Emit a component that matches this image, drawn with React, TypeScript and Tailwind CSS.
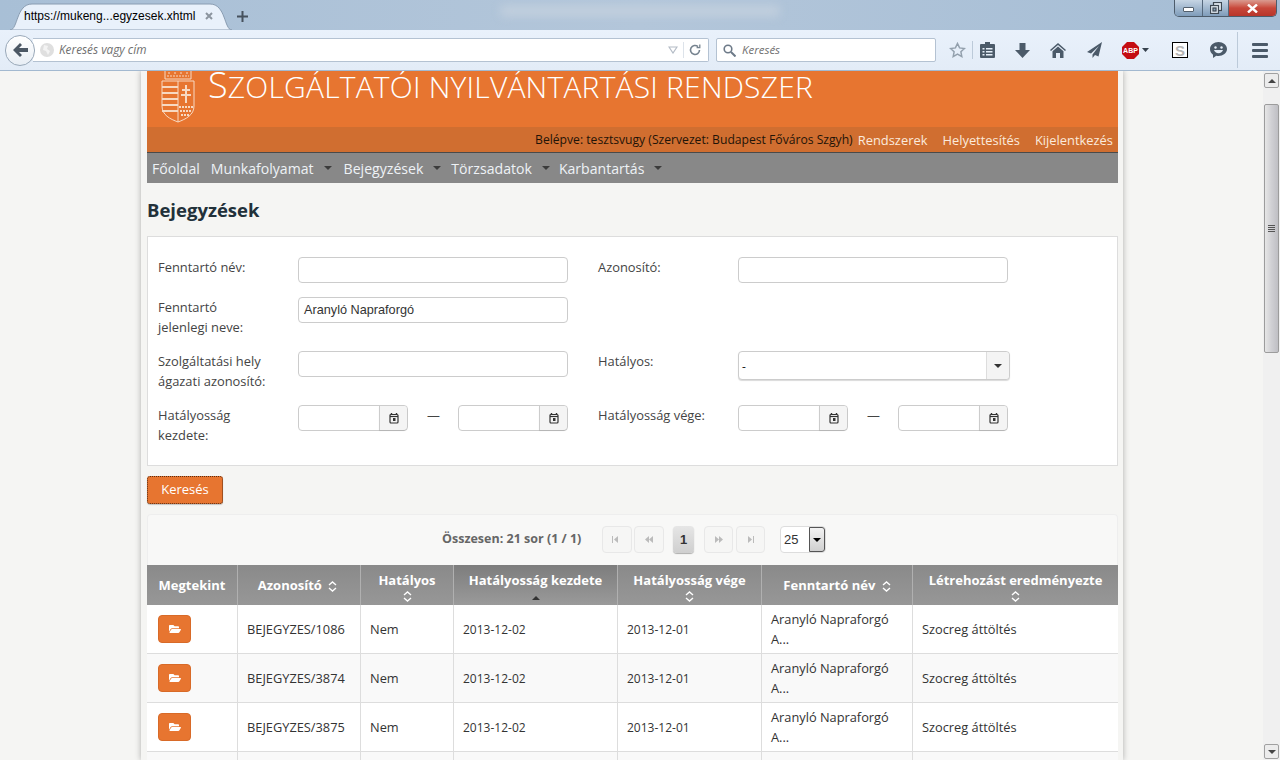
import { FaFolderOpen } from "react-icons/fa";

const font = "font-['Open_Sans','Liberation_Sans',sans-serif]";

const rows = ["BEJEGYZES/1086", "BEJEGYZES/3874", "BEJEGYZES/3875", "BEJEGYZES/3876"];

function Calendar() {
  return (
    <svg width="10" height="11" viewBox="0 0 10 11" fill="none">
      <path d="M2.5 0v2M7.5 0v2" stroke="#333" strokeWidth="1.4" />
      <rect x="1" y="1.5" width="8" height="8.5" rx="1" stroke="#333" strokeWidth="1.2" />
      <path d="M1 3.5h8" stroke="#333" strokeWidth="1.2" />
      <rect x="4" y="5" width="2.5" height="3" fill="#333" />
    </svg>
  );
}

function SortBoth() {
  return (
    <svg width="9" height="11" viewBox="0 0 9 11" fill="none" stroke="#fff" strokeWidth="1.4" className="inline-block">
      <path d="M1 4l3.5-3L8 4M1 7l3.5 3L8 7" />
    </svg>
  );
}

function DateField({ w }: { w: string }) {
  return (
    <div className={`flex h-[26px] rounded-[4px] border border-[#ccc] bg-white ${w}`}>
      <div className="flex-1" />
      <div className="flex w-[28px] items-center justify-center rounded-r-[4px] border-l border-[#ccc] bg-[#f4f4f4] shadow-[0_1px_1px_rgba(0,0,0,0.12)]">
        <Calendar />
      </div>
    </div>
  );
}

function PageBtn({ d, w }: { d: string; w: string }) {
  return (
    <div className={`flex h-[27px] items-center justify-center rounded-[4px] border border-[#e8e8e8] bg-[#f6f6f5] ${w}`}>
      <svg width="14" height="7" viewBox="0 0 14 7" fill="#bbb">
        <path d={d} />
      </svg>
    </div>
  );
}

function Browser() {
  return (
    <>
      {/* Tabs */}
      <div className="relative h-[30px] shrink-0 overflow-hidden bg-gradient-to-r from-[#a8bfd6] via-[#b3c6da] to-[#a5bdd5]">
        <div className="absolute left-[500px] top-[6px] h-[10px] w-[280px] rounded-full bg-[#c3d0de] blur-[5px]" />
        <div className="flex h-full items-end pl-[10px]">
          <div className="relative flex h-[28px] w-[222px] items-center pl-[14px]">
            <svg className="absolute inset-0" width="222" height="28" viewBox="0 0 222 28">
              <path d="M0 28C8 28 6 2 22 2H200C216 2 214 28 222 28Z" fill="#e9f1fb" stroke="#8a9db2" />
            </svg>
            <span className="relative font-['Liberation_Sans',sans-serif] text-[12px] text-black">https://mukeng...egyzesek.xhtml</span>
            <svg className="relative ml-[10px]" width="8" height="8" viewBox="0 0 8 8" stroke="#8c959f" strokeWidth="2">
              <path d="M1 1l6 6M7 1l-6 6" />
            </svg>
          </div>
          <svg className="mb-[8px] ml-[5px]" width="11" height="11" viewBox="0 0 11 11" stroke="#46515d" strokeWidth="2">
            <path d="M5.5 0v11M0 5.5h11" />
          </svg>
        </div>
        <div className="absolute right-[3px] top-0 flex h-[17px] overflow-hidden rounded-b-[5px] border border-t-0 border-[#4d5c6b]">
          <div className="flex w-[28px] items-center justify-center border-r border-[#55687c] bg-gradient-to-b from-[#c6d5e4] to-[#7f9cba]">
            <div className="mt-[3px] h-[5px] w-[11px] rounded-[1px] border border-[#53606e] bg-white" />
          </div>
          <div className="flex w-[26px] items-center justify-center border-r border-[#55687c] bg-gradient-to-b from-[#c6d5e4] to-[#7f9cba]">
            <svg width="12" height="12" viewBox="0 0 12 12" fill="none" stroke="#3e4852" strokeWidth="1.2">
              <rect x="3.5" y="0.5" width="8" height="8" fill="#dfe7ef" />
              <rect x="0.5" y="3.5" width="8" height="8" fill="#dfe7ef" />
              <rect x="3" y="6" width="3" height="3" fill="#8ba5bf" />
            </svg>
          </div>
          <div className="flex w-[47px] items-center justify-center bg-gradient-to-b from-[#d99a90] via-[#c8473a] to-[#b8352a]">
            <svg width="11" height="9" viewBox="0 0 11 9" stroke="#fff" strokeWidth="2.4">
              <path d="M1 0.5l9 8M10 0.5l-9 8" />
            </svg>
          </div>
        </div>
      </div>

      {/* Toolbar */}
      <div className="flex h-[41px] shrink-0 items-center border-b border-[#a3b9d0] bg-gradient-to-b from-[#e9f1fb] to-[#e3ecf7] pl-[5px]">
        <div className="z-10 flex h-[31px] w-[30px] shrink-0 items-center justify-center rounded-full border border-[#9aa9b9] bg-gradient-to-b from-white to-[#e8eef5]">
          <svg width="15" height="14" viewBox="0 0 15 14" fill="#4c5865">
            <path d="M7 0l2 2-3 3h9v4H6l3 3-2 2-7-7z" />
          </svg>
        </div>
        <div className="-ml-[2px] flex h-[24px] w-[676px] items-center rounded-r-[2px] border border-l-0 border-[#b4c2d2] bg-white pl-[7px] pr-[7px]">
          <svg width="14" height="14" viewBox="0 0 14 14">
            <circle cx="7" cy="7" r="7" fill="#dfdfdf" />
            <path d="M4 2l4 1-1 3 3 2-2 4-2-4-3-1z" fill="#f3f3f3" />
          </svg>
          <span className="ml-[5px] flex-1 text-[11.8px] italic text-[#6f6f6f]">Keresés vagy cím</span>
          <svg width="10" height="8" viewBox="0 0 10 8" fill="none" stroke="#b4bcc6" strokeWidth="1.2">
            <path d="M1 1h8L5 7z" />
          </svg>
          <div className="mx-[5px] h-[16px] w-px bg-[#dde3ea]" />
          <svg width="12" height="12" viewBox="0 0 12 12" fill="none" stroke="#76838f" strokeWidth="1.6">
            <path d="M10.5 6A4.5 4.5 0 1 1 9 2.6" />
            <path d="M10.8 0.5v3.2H7.6" strokeWidth="1.3" />
          </svg>
        </div>
        <div className="ml-[7px] flex h-[24px] w-[220px] items-center rounded-[2px] border border-[#b4c2d2] bg-white pl-[6px]">
          <svg width="13" height="13" viewBox="0 0 13 13" fill="none" stroke="#6d7a88" strokeWidth="1.6">
            <circle cx="5" cy="5" r="3.8" />
            <path d="M8 8l4.5 4.5" strokeWidth="2" />
          </svg>
          <span className="ml-[6px] text-[11.5px] italic text-[#6f6f6f]">Keresés</span>
        </div>
        <svg className="ml-[13px]" width="17" height="16" viewBox="0 0 17 16" fill="none" stroke="#93a0ad" strokeWidth="1.5">
          <path d="M8.5 1.5l2.1 4.4 4.8.6-3.5 3.3.9 4.8-4.3-2.4-4.3 2.4.9-4.8L1.600 6.500l4.800-.6z" />
        </svg>
        <div className="ml-[6px] h-[18px] w-px bg-[#bccad9]" />
        <svg className="ml-[7px]" width="15" height="16" viewBox="0 0 15 16" fill="#4b5a69">
          <path d="M5 0h5v2h4a1 1 0 0 1 1 1v12a1 1 0 0 1-1 1H1a1 1 0 0 1-1-1V3a1 1 0 0 1 1-1h4z" />
          <path d="M2.500 6h2v1.500h-2zM6 6h6.500v1.500H6zM2.500 9h2v1.500h-2zM6 9h6.500v1.500H6zM2.500 12h2v1.500h-2zM6 12h6.500v1.500H6z" fill="#e6eff9" />
        </svg>
        <svg className="ml-[20px]" width="15" height="15" viewBox="0 0 15 15" fill="#4b5a69">
          <path d="M4.500 0h6v7H15l-7.500 8L0 7h4.500z" />
        </svg>
        <svg className="ml-[20px]" width="16" height="15" viewBox="0 0 16 15" fill="#4b5a69">
          <path d="M8 0l8 7-1 1-7-6-7 6-1-1z" />
          <path d="M8 3.500l5.500 4.700V15H10v-5H6v5H2.500V8.200z" />
        </svg>
        <svg className="ml-[21px]" width="15" height="16" viewBox="0 0 15 16" fill="#4b5a69">
          <path d="M15 0L0 10l4 1.500L12 4 5.500 12.500V16l2.500-3 3.500 1.500z" />
        </svg>
        <svg className="ml-[20px]" width="17" height="17" viewBox="0 0 17 17">
          <path d="M5 0h7l5 5v7l-5 5H5l-5-5V5z" fill="#c40d12" />
          <text x="8.500" y="11" textAnchor="middle" fontSize="7" fontWeight="700" fill="#fff" fontFamily="Liberation Sans">ABP</text>
        </svg>
        <svg className="ml-[3px]" width="7" height="4" viewBox="0 0 7 4" fill="#37424e">
          <path d="M0 0h7L3.500 4z" />
        </svg>
        <div className="ml-[23px] flex h-[16px] w-[16px] items-center justify-center border border-black bg-white font-['Liberation_Sans',sans-serif] text-[15px] font-bold leading-none text-[#b5b5b5]">S</div>
        <svg className="ml-[22px]" width="17" height="16" viewBox="0 0 17 16" fill="#4b5a69">
          <path d="M8.500 0C13 0 17 3 17 7s-4 7-8.500 7c-.8 0-1.500-.1-2.200-.2L3 16v-3.300C1.200 11.400 0 9.300 0 7c0-4 4-7 8.500-7z" />
          <circle cx="5.500" cy="5.500" r="1.200" fill="#e6eff9" />
          <circle cx="11.500" cy="5.500" r="1.200" fill="#e6eff9" />
          <path d="M4 8h9c-.5 2-2.300 3.200-4.500 3.200S4.500 10 4 8z" fill="#e6eff9" />
        </svg>
        <div className="ml-[10px] h-[36px] w-px bg-[#bccad9]" />
        <div className="ml-[14px] flex w-[16px] flex-col gap-[3px]">
          <div className="h-[3px] rounded-[1px] bg-[#4b5a69]" />
          <div className="h-[3px] rounded-[1px] bg-[#4b5a69]" />
          <div className="h-[3px] rounded-[1px] bg-[#4b5a69]" />
        </div>
      </div>
    </>
  );
}

function Scrollbar() {
  return (
    <div className="flex w-[17px] shrink-0 flex-col items-center bg-[#f0f0f0]">
      <div className="mt-[2px] flex h-[15px] w-[15px] items-center justify-center rounded-[2px] border border-[#a0a0a0] bg-[#ececec]">
        <div className="h-0 w-0 border-x-[4px] border-b-[4px] border-x-transparent border-b-[#444]" />
      </div>
      <div className="mt-[16px] flex h-[249px] w-[15px] items-center justify-center rounded-[2px] border border-[#9c9c9c] bg-gradient-to-r from-[#e6e6e6] via-[#d0d0d4] to-[#bfbfc4]">
        <div className="flex w-[7px] flex-col gap-px">
          <div className="h-px bg-[#555]" />
          <div className="h-px bg-[#555]" />
          <div className="h-px bg-[#555]" />
          <div className="h-px bg-[#555]" />
        </div>
      </div>
      <div className="mb-[1px] mt-auto flex h-[15px] w-[15px] items-center justify-center rounded-[2px] border border-[#a0a0a0] bg-[#ececec]">
        <div className="h-0 w-0 border-x-[4px] border-t-[4px] border-x-transparent border-t-[#444]" />
      </div>
    </div>
  );
}

function Arms() {
  return (
    <svg width="34" height="52" viewBox="0 0 34 52" fill="none" stroke="#f7d9c2" strokeWidth="1">
      <path d="M4 0v8h26V0" />
      <path d="M7 2h3M13 2h3M19 2h3M25 2h3M6 5h22" strokeDasharray="2 1" />
      <path d="M1 10h32v25c0 9-8 13-16 16C9 48 1 44 1 35z" />
      <path d="M17 10v41" />
      <path d="M1 16h16M1 22h16M1 28h16M1 34h16M1 40h16" strokeWidth="2" />
      <path d="M25 14v18M21 19h8M20 24h10" strokeWidth="2" />
      <path d="M18 36h14M19 40h12M20 44h9" strokeDasharray="2 1" strokeWidth="2" />
    </svg>
  );
}

function Header() {
  return (
    <>
      <div className="flex h-[56px] overflow-hidden bg-[#e77530] pl-[14px]">
        <Arms />
        <div className="-mt-[6px] ml-[13px] whitespace-nowrap font-light leading-[40px] tracking-[0.2px] text-white">
          <span className="text-[36px]">S</span>
          <span className="text-[30px]">ZOLGÁLTATÓI NYILVÁNTARTÁSI RENDSZER</span>
        </div>
      </div>
      <div className="flex h-[25px] items-center justify-end bg-[#d06e30] pr-[5px] pt-[2px] text-[12.9px]">
        <span className="text-[12.15px] text-[#1f1408]">Belépve: tesztsvugy (Szervezet: Budapest Főváros Szgyh)</span>
        <span className="ml-[5px] text-[#fbeadd]">Rendszerek</span>
        <span className="ml-[15px] text-[#fbeadd]">Helyettesítés</span>
        <span className="ml-[15px] text-[#fbeadd]">Kijelentkezés</span>
      </div>
      <div className="flex h-[31px] items-center border-t border-[#4a4a4a] bg-[#888] pl-[5px] pt-px text-[14.1px] text-[#eef2f6]">
        <span>Főoldal</span>
        {[
          ["Munkafolyamat", "ml-[11px]"],
          ["Bejegyzések", "ml-[12px]"],
          ["Törzsadatok", "ml-[10px]"],
          ["Karbantartás", "ml-[9px]"],
        ].map(([t, m]) => (
          <span key={t} className={`flex items-center ${m}`}>
            {t}
            <span className="ml-[10px] mt-[-1px] h-0 w-0 border-x-[4px] border-t-[4px] border-x-transparent border-t-[#3c3c3c]" />
          </span>
        ))}
      </div>
    </>
  );
}

function Form() {
  const input = "h-[26px] w-[270px] rounded-[4px] border border-[#ccc] bg-white";
  return (
    <div className="grid grid-cols-[140px_270px_30px_140px_270px] gap-y-[14px] border border-[#ddd] bg-white pb-[20px] pl-[10px] pt-[20px] text-[12.9px] leading-[20px] text-[#444]">
      <div>Fenntartó név:</div>
      <div className={input} />
      <div />
      <div>Azonosító:</div>
      <div className={input} />

      <div>Fenntartó<br />jelenlegi neve:</div>
      <div className={`${input} flex items-center pl-[5px] font-['Liberation_Sans',sans-serif] text-[12.7px] text-[#333]`}>Aranyló Napraforgó</div>
      <div />
      <div />
      <div />

      <div>Szolgáltatási hely<br />ágazati azonosító:</div>
      <div className={input} />
      <div />
      <div>Hatályos:</div>
      <div className="flex h-[29px] w-[272px] rounded-[4px] border border-[#ccc] bg-white shadow-[0_1px_1px_rgba(0,0,0,0.15)]">
        <span className="flex flex-1 items-center pl-[3px] pt-[2px] text-[12px] text-[#222]">-</span>
        <div className="flex w-[23px] items-center justify-center rounded-r-[4px] border-l border-[#ddd] bg-[#f4f4f4]">
          <div className="h-0 w-0 border-x-[4px] border-t-[4px] border-x-transparent border-t-[#333]" />
        </div>
      </div>

      <div>Hatályosság<br />kezdete:</div>
      <div className="flex items-start">
        <DateField w="w-[110px]" />
        <span className="w-[50px] pl-px text-center leading-[21px]">—</span>
        <DateField w="w-[110px]" />
      </div>
      <div />
      <div>Hatályosság vége:</div>
      <div className="flex items-start">
        <DateField w="w-[110px]" />
        <span className="w-[50px] pl-px text-center leading-[21px]">—</span>
        <DateField w="w-[110px]" />
      </div>
    </div>
  );
}

function Results() {
  const th = "border-l border-[#b0b0b0] px-[9px] text-center align-middle text-[13px] font-bold leading-[15px] text-white first:border-l-0";
  const td = "border-b border-l border-[#ddd] pl-[9px] pr-[9px] text-[12.8px] leading-[20px] text-[#333] first:border-l-0";
  return (
    <div className="mt-[10px] rounded-t-[4px] border-x border-t border-[#eee] bg-[#f8f8f7]">
      <div className="flex h-[50px] items-center pb-px pl-[294px]">
        <span className="w-[160px] text-[12.5px] font-bold text-[#666]">Összesen: 21 sor (1 / 1)</span>
        <PageBtn w="w-[30px]" d="M2 0h1v7H2zM4 3.500L8 0v7z" />
        <div className="w-[2px]" />
        <PageBtn w="w-[30px]" d="M3 3.500L7 0v7zM7 3.500L11 0v7z" />
        <div className="ml-[9px] flex h-[27px] w-[21px] items-center justify-center rounded-[4px] bg-gradient-to-b from-[#e6e6e6] to-[#cfcfcf] font-['Liberation_Sans',sans-serif] text-[13px] font-bold text-[#333] shadow-[0_1px_1px_rgba(0,0,0,0.3)]">1</div>
        <div className="w-[10px]" />
        <PageBtn w="w-[29px]" d="M3 0l4 3.500-4 3.500zM7 0l4 3.500-4 3.500z" />
        <div className="w-[3px]" />
        <PageBtn w="w-[29px]" d="M4 0l4 3.500L4 7zM9 0h1v7H9z" />
        <div className="ml-[15px] flex h-[27px] w-[46px] items-center rounded-[4px] border border-[#ddd] bg-white pl-[3px] font-['Liberation_Sans',sans-serif] text-[13px] text-[#333]">
          <span className="flex-1">25</span>
          <div className="flex h-full w-[16px] items-center justify-center rounded-r-[3px] border border-[#555] bg-gradient-to-b from-[#f2f2f2] to-[#d0d0d0]">
            <div className="h-0 w-0 border-x-[4px] border-t-[4px] border-x-transparent border-t-black" />
          </div>
        </div>
      </div>
      <table className="-mx-px w-[971px] table-fixed border-separate border-spacing-0">
        <colgroup>
          <col className="w-[90px]" />
          <col className="w-[123px]" />
          <col className="w-[93px]" />
          <col className="w-[164px]" />
          <col className="w-[144px]" />
          <col className="w-[151px]" />
          <col className="w-[206px]" />
        </colgroup>
        <thead>
          <tr className="h-[40px] bg-gradient-to-b from-[#8a8a8a] to-[#979797]">
            <th className={th}>Megtekint</th>
            <th className={`${th} pr-[12px]`}>Azonosító <span className="ml-[3px]"><SortBoth /></span></th>
            <th className={`${th} pt-[5px]`}>Hatályos<br /><SortBoth /></th>
            <th className={`${th} bg-gradient-to-b from-[#7d7d7d] to-[#9a9a9a] pt-[5px]`}>
              Hatályosság kezdete
              <br />
              <span className="inline-block h-0 w-0 border-x-[4px] border-b-[4px] border-x-transparent border-b-[#333]" />
            </th>
            <th className={`${th} pt-[5px]`}>Hatályosság vége<br /><SortBoth /></th>
            <th className={th}>Fenntartó név <span className="ml-[3px]"><SortBoth /></span></th>
            <th className={`${th} pt-[5px]`}>Létrehozást eredményezte<br /><SortBoth /></th>
          </tr>
        </thead>
        <tbody>
          {rows.map((r, i) => (
            <tr key={r} className={`h-[49px] ${i % 2 ? "bg-[#f9f9f9]" : "bg-white"}`}>
              <td className={`${td} pl-[11px]`}>
                <div className="flex h-[28px] w-[33px] items-center justify-center rounded-[4px] border border-[#d86a28] bg-[#e77530]">
                  <FaFolderOpen className="text-[12px] text-white" />
                </div>
              </td>
              <td className={`${td} text-[12.5px]`}>{r}</td>
              <td className={td}>Nem</td>
              <td className={`${td} pt-px text-[12px]`}>2013-12-02</td>
              <td className={`${td} pt-px text-[12px]`}>2013-12-01</td>
              <td className={td}>Aranyló Napraforgó A...</td>
              <td className={td}>Szocreg áttöltés</td>
            </tr>
          ))}
        </tbody>
      </table>
    </div>
  );
}

export default function App() {
  return (
    <div className={`flex h-[760px] flex-col overflow-hidden bg-[#f5f5f3] ${font}`}>
      <Browser />
      <div className="flex min-h-0 flex-1">
        <div className="min-w-0 flex-1 overflow-hidden">
          <div className="ml-[141px] h-full w-[982px] bg-[#f5f5f3] pl-[6px] shadow-[0_0_6px_rgba(0,0,0,0.3)]">
            <div className="w-[971px]">
              <Header />
              <h1 className="mb-[14px] mt-[14px] text-[18.5px] font-bold leading-[25px] text-[#22313a]">Bejegyzések</h1>
              <Form />
              <button className="mt-[10px] block h-[28px] w-[76px] rounded-[3px] border border-dotted border-[#5a2c10] bg-[#e77530] text-[13px] text-white shadow-[0_1px_1px_rgba(0,0,0,0.2)]">Keresés</button>
              <Results />
            </div>
          </div>
        </div>
        <Scrollbar />
      </div>
    </div>
  );
}
